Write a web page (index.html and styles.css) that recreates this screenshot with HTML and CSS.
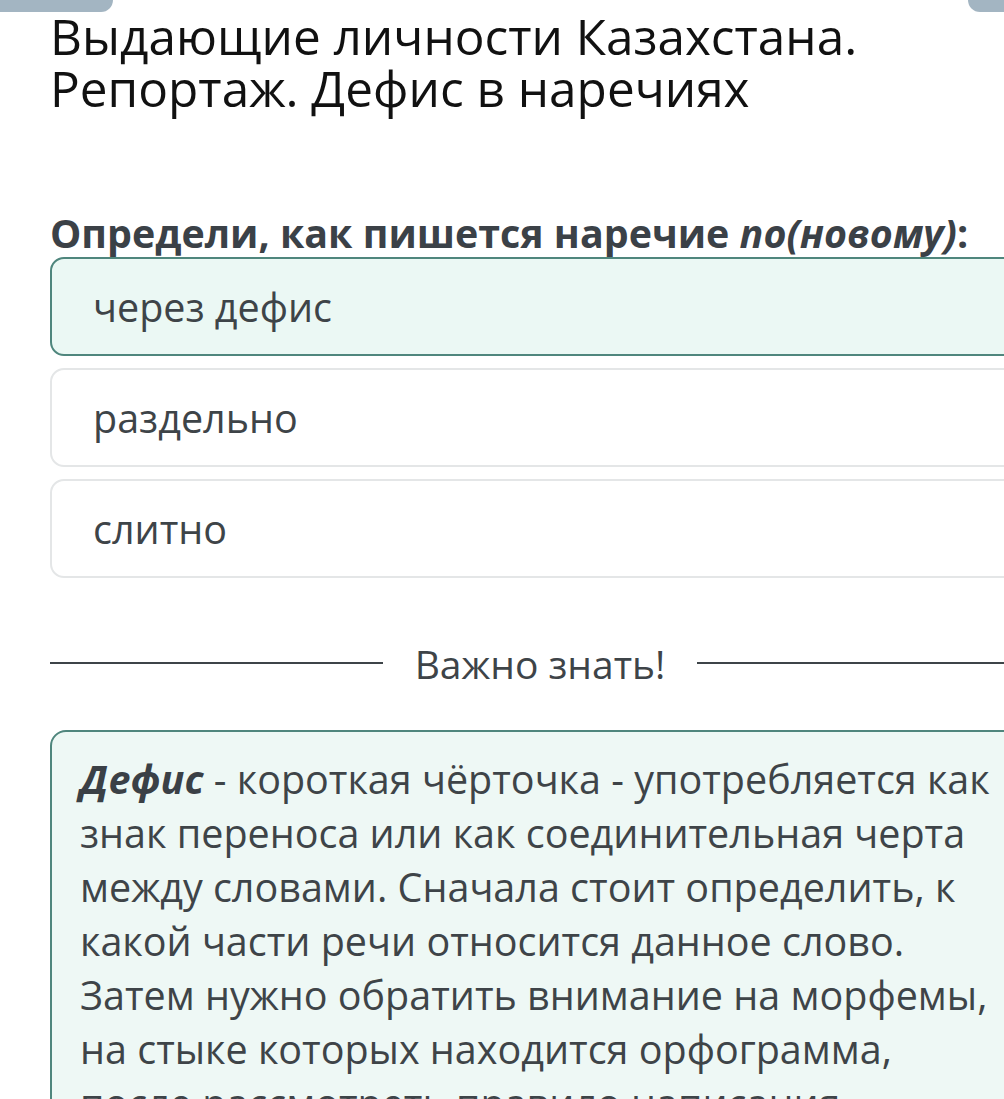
FILE: index.html
```html
<!DOCTYPE html>
<html lang="ru">
<head>
<meta charset="utf-8">
<title>Дефис в наречиях</title>
<link rel="stylesheet" href="styles.css">
</head>
<body>
<div class="topbar">
  <span class="tab tab-left"></span>
  <span class="tab tab-right"></span>
</div>
<main class="page">
  <h1 class="title">Выдающие личности Казахстана. Репортаж. Дефис в наречиях</h1>
  <p class="question">Определи, как пишется наречие <i>по(новому)</i>:</p>
  <div class="options">
    <div class="option selected">через дефис</div>
    <div class="option">раздельно</div>
    <div class="option">слитно</div>
  </div>
  <div class="divider"><span class="line"></span><span class="divider-text">Важно знать!</span><span class="line"></span></div>
  <div class="info">
    <p><b><i>Дефис</i></b> - короткая чёрточка - употребляется как знак переноса или как соединительная черта между словами. Сначала стоит определить, к какой части речи относится данное слово. Затем нужно обратить внимание на морфемы, на стыке которых находится орфограмма, после рассмотреть правило написания.</p>
  </div>
</main>
</body>
</html>
```

FILE: styles.css
```css
html, body {
  margin: 0;
  padding: 0;
  background: #ffffff;
  overflow: hidden;
}
body {
  width: 1004px;
  height: 1099px;
  font-family: "Open Sans", "Noto Sans", sans-serif;
  color: #3d4349;
}
.topbar {
  display: flex;
  justify-content: space-between;
  height: 0;
}
.tab {
  display: block;
  height: 12px;
  background: #a3b5c2;
}
.tab-left {
  width: 113px;
  border-radius: 0 0 12px 0;
}
.tab-right {
  width: 36px;
  border-radius: 0 0 0 12px;
}
.page {
  width: 980px;
  padding-left: 50px;
}
.title {
  margin: 0;
  padding-top: 10px;
  font-size: 49.5px;
  font-weight: 400;
  line-height: 52px;
  color: #111111;
  width: 880px;
}
.question {
  margin: 96px 0 0;
  font-size: 39.4px;
  font-weight: 700;
  line-height: 46px;
  color: #3b4147;
}
.options {
  display: flex;
  flex-direction: column;
  gap: 12px;
  margin-top: 1px;
}
.option {
  height: 95px;
  border: 2px solid #e4e6e7;
  border-radius: 14px;
  padding-left: 41px;
  display: flex;
  align-items: center;
  font-size: 39.5px;
  color: #3e4448;
  background: #ffffff;
}
.option.selected {
  border-color: #4f867d;
  background: #ebf8f4;
}
.divider {
  display: flex;
  align-items: center;
  margin-top: 55px;
  height: 60px;
}
.line {
  display: block;
  height: 2px;
  background: #3e4448;
  flex: 1;
}
.divider-text {
  font-size: 39px;
  padding: 0 32px;
  color: #3e4448;
}
.info {
  margin-top: 37px;
  border: 2px solid #4f867d;
  border-radius: 16px;
  background: #eef8f5;
  padding: 20px 20px 20px 28px;
}
.info p {
  margin: 0;
  font-size: 39.5px;
  line-height: 54px;
  color: #3e4448;
  width: 914px;
}
.info b {
  color: #3a4046;
}
```
